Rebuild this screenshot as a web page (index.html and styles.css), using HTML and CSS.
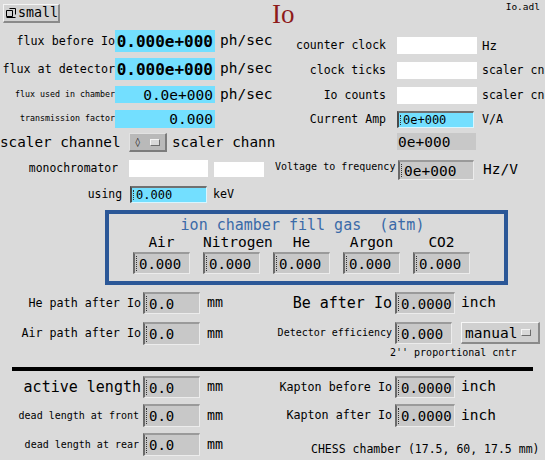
FILE: index.html
```html
<!DOCTYPE html>
<html>
<head>
<meta charset="utf-8">
<title>Io</title>
<link rel="stylesheet" href="styles.css">
</head>
<body>
<div class="screen">
  <header class="hdr">
    <div class="rdbtn">
      <svg class="rdicon" width="12" height="12" viewBox="0 0 12 12"><path d="M1.5 3.5h6v6h-6z M4.5 1.5h6v6" fill="none" stroke="#000" stroke-width="1"/><path d="M1.5 10.5h9" stroke="#000" stroke-width="1"/></svg>
      <span>small</span>
    </div>
    <div class="title">Io</div>
    <div class="fname">Io.adl</div>
  </header>

  <section class="top">
    <div class="colL">
      <div class="row r1"><span class="lbl w115 f117">flux before Io</span><span class="fld mon big w100">0.000e+000</span><span class="unit ml5 f145">ph/sec</span></div>
      <div class="row r2"><span class="lbl w115 f117">flux at detector</span><span class="fld mon big w100">0.000e+000</span><span class="unit ml5 f145">ph/sec</span></div>
      <div class="row r3"><span class="lbl w115 f83">flux used in chamber</span><span class="fld mon right w100 f145">0.0e+000</span><span class="unit ml5 f145">ph/sec</span></div>
      <div class="row r4"><span class="lbl w115 f83">transmission factor</span><span class="fld mon right w100 f145">0.000</span></div>
      <div class="row r5"><span class="lbl lbl-left w129 f143">scaler channel</span><span class="menu w38"><span class="dia">◊</span><span class="mark"></span></span><span class="lbl lbl-left ml5 w105 f143">scaler chann</span></div>
      <div class="row r6"><span class="lbl w118 f114">monochromator</span><span class="fld white ml11 w79"></span><span class="fld white ml6 w50 h15"></span></div>
      <div class="row r7"><span class="lbl w122 f114">using</span><span class="fld ent blue ml8 w77 f12">0.000</span><span class="unit ml6 f117">keV</span></div>
    </div>
    <div class="colR">
      <div class="row a1"><span class="lbl lblR f115">counter clock</span><span class="fld white ml11 w80"></span><span class="unit ml5 f125">Hz</span></div>
      <div class="row a2"><span class="lbl lblR f115">clock ticks</span><span class="fld white ml11 w80"></span><span class="unit ml5 f115">scaler cn</span></div>
      <div class="row a3"><span class="lbl lblR f115">Io counts</span><span class="fld white ml11 w80"></span><span class="unit ml5 f115">scaler cn</span></div>
      <div class="row a4"><span class="lbl lblR f115">Current Amp</span><span class="fld ent blue ml11 w77 f12">0e+000</span><span class="unit ml8 f117">V/A</span></div>
      <div class="row a5"><span class="lbl lblR"></span><span class="fld grey ml11 w79 f145">0e+000</span></div>
      <div class="row a6"><span class="lbl w121 f10 top">Voltage to frequency</span><span class="fld ent ml2 w76 f145">0e+000</span><span class="unit ml9 f145">Hz/V</span></div>
    </div>
  </section>

  <section class="gasbox">
    <div class="gastitle">ion chamber fill gas  (atm)</div>
    <div class="gasgrid">
      <span class="gaslbl">Air</span>
      <span class="gaslbl">Nitrogen</span>
      <span class="gaslbl">He</span>
      <span class="gaslbl">Argon</span>
      <span class="gaslbl">CO2</span>
      <span class="fld ent f14 h22">0.000</span>
      <span class="fld ent f14 h22">0.000</span>
      <span class="fld ent f14 h22">0.000</span>
      <span class="fld ent f14 h22">0.000</span>
      <span class="fld ent f14 h22">0.000</span>
    </div>
  </section>

  <section class="mid">
    <div class="colL">
      <div class="row m1"><span class="lbl w141 f117">He path after Io</span><span class="fld ent ml2 w57 f14">0.0</span><span class="unit ml7 f13">mm</span></div>
      <div class="row m2"><span class="lbl w141 f117">Air path after Io</span><span class="fld ent ml2 w57 f14">0.0</span><span class="unit ml7 f13">mm</span></div>
    </div>
    <div class="colR">
      <div class="row n1"><span class="lbl w117 f15">Be after Io</span><span class="fld ent ml3 w60 f14">0.0000</span><span class="unit ml6 f145">inch</span></div>
      <div class="row n2"><span class="lbl w117 f10">Detector efficiency</span><span class="fld ent ml3 w57 f14">0.000</span><span class="menu light ml9 w79"><span class="mtext">manual</span><span class="mark"></span></span></div>
      <div class="caption cap1">2'' proportional cntr</div>
    </div>
  </section>

  <div class="rule"></div>

  <section class="bottom">
    <div class="colL">
      <div class="row b1"><span class="lbl w141 f15">active length</span><span class="fld ent ml2 w57 f14">0.0</span><span class="unit ml7 f13">mm</span></div>
      <div class="row b2"><span class="lbl w139 f10">dead length at front</span><span class="fld ent ml4 w57 f14">0.0</span><span class="unit ml7 f13">mm</span></div>
      <div class="row b3"><span class="lbl w139 f10">dead length at rear</span><span class="fld ent ml4 w57 f14">0.0</span><span class="unit ml7 f13">mm</span></div>
    </div>
    <div class="colR">
      <div class="row c1"><span class="lbl w117 f117">Kapton before Io</span><span class="fld ent ml3 w60 f14">0.0000</span><span class="unit ml6 f145">inch</span></div>
      <div class="row c2"><span class="lbl w117 f117">Kapton after Io</span><span class="fld ent ml3 w60 f14">0.0000</span><span class="unit ml6 f145">inch</span></div>
      <div class="caption cap2">CHESS chamber (17.5, 60, 17.5 mm)</div>
    </div>
  </section>
</div>
</body>
</html>
```

FILE: styles.css
```css
html, body {
  margin: 0;
  padding: 0;
  background: #dadada;
}
body {
  font-family: "DejaVu Sans Mono", "Liberation Mono", monospace;
  color: #000;
  width: 545px;
  height: 460px;
  overflow: hidden;
}
.screen {
  width: 545px;
  height: 460px;
  overflow: hidden;
}

/* header */
.hdr {
  height: 30px;
  display: flex;
  align-items: flex-start;
}
.rdbtn {
  margin: 4px 0 0 3px;
  width: 57px;
  height: 19px;
  box-sizing: border-box;
  background: #d2d2d2;
  border-style: solid;
  border-width: 1px 2px 2px 1px;
  border-color: #f4f4f4 #8a8a8a #8a8a8a #f4f4f4;
  display: flex;
  align-items: center;
  font-size: 13.3px;
  line-height: 16px;
}
.rdicon {
  margin: 0 1px 0 1px;
  flex: none;
}
.title {
  margin: -1px 0 0 212px;
  font-family: "Liberation Serif", serif;
  font-size: 27px;
  line-height: 30px;
  color: #8e1a1a;
}
.fname {
  margin: 1px 5px 0 auto;
  font-size: 9.5px;
  line-height: 12px;
}

/* generic */
.row {
  display: flex;
  align-items: center;
}
.lbl {
  flex: none;
  text-align: right;
  white-space: pre;
  overflow: hidden;
  line-height: 1.2;
}
.lbl-left { text-align: left; }
.lbl.top { align-self: flex-start; margin-top: 1px; }
.unit {
  flex: none;
  white-space: pre;
  line-height: 1.2;
}
.fld {
  flex: none;
  box-sizing: border-box;
  white-space: pre;
  overflow: hidden;
  height: 100%;
  display: flex;
  align-items: center;
  position: relative;
}
.mon { background: #73dfff; justify-content: flex-end; padding-right: 2px; }
.big { font-weight: bold; font-size: 16px; }
.white { background: #ffffff; }
.grey { background: #c8c8c8; padding-left: 1px; }
.ent {
  background: #c8c8c8;
  border-style: solid;
  border-width: 2px 1px 1px 2px;
  border-color: #9a9a9a #ececec #ececec #6a6a6a;
  padding-left: 4px;
}
.ent.blue { background: #73dfff; border-color: #707070 #d8f6ff #d8f6ff #4a4a4a; }
.ent::before {
  content: "";
  position: absolute;
  left: 1px;
  top: 2px;
  bottom: 2px;
  border-left: 1px dotted #333;
}
.h15 { height: 15px; align-self: flex-end; }
.h22 { height: 22px; }

/* menus */
.menu {
  flex: none;
  box-sizing: border-box;
  height: 100%;
  background: #b9b9b9;
  border-style: solid;
  border-width: 1px 2px 2px 1px;
  border-color: #e2e2e2 #7c7c7c #7c7c7c #e2e2e2;
  display: flex;
  align-items: center;
  justify-content: space-between;
  padding: 0 5px 0 5px;
}
.menu.light { background: #d0d0d0; border-color: #f6f6f6 #8a8a8a #8a8a8a #f6f6f6; padding: 0 7px 0 3px; }
.dia { font-size: 9px; line-height: 10px; }
.mtext { font-size: 14.5px; line-height: 16px; }
.mark {
  width: 8px;
  height: 5px;
  background: #d8d8d8;
  border-style: solid;
  border-width: 1px;
  border-color: #f4f4f4 #6c6c6c #6c6c6c #f4f4f4;
}

/* widths and margins */
.w38 { width: 38px; }
.w50 { width: 50px; }
.w57 { width: 57px; }
.w60 { width: 60px; }
.w76 { width: 76px; }
.w77 { width: 77px; }
.w79 { width: 79px; }
.w80 { width: 80px; }
.w100 { width: 100px; }
.w105 { width: 105px; }
.w115 { width: 115px; }
.w117 { width: 117px; }
.w118 { width: 118px; }
.w121 { width: 121px; }
.w122 { width: 122px; }
.w129 { width: 129px; }
.w139 { width: 139px; }
.w141 { width: 141px; }
.ml2 { margin-left: 2px; }
.ml3 { margin-left: 3px; }
.ml4 { margin-left: 4px; }
.ml5 { margin-left: 5px; }
.ml6 { margin-left: 6px; }
.ml7 { margin-left: 7px; }
.ml8 { margin-left: 8px; }
.ml9 { margin-left: 9px; }
.ml11 { margin-left: 11px; }

/* font sizes */
.f83 { font-size: 8.3px; }
.f10 { font-size: 10px; }
.f114 { font-size: 11.4px; }
.f115 { font-size: 11.5px; }
.f117 { font-size: 11.7px; }
.f12 { font-size: 12px; }
.f125 { font-size: 12.5px; }
.f13 { font-size: 13.3px; }
.f14 { font-size: 14px; }
.f143 { font-size: 14.3px; }
.f145 { font-size: 14.5px; }
.f15 { font-size: 15px; }

/* top section */
.top {
  height: 180px;
  display: flex;
}
.colL { width: 275px; flex: none; }
.colR { flex: 1; }
.r1 { height: 22px; }
.r2 { margin-top: 6px; height: 22px; }
.r3 { margin-top: 6px; height: 17px; }
.r4 { margin-top: 7px; height: 18px; }
.r5 { margin-top: 5px; height: 19px; }
.r6 { margin-top: 8px; height: 17px; }
.r7 { margin-top: 9px; height: 17px; }
.lblR { margin-left: 21px; width: 90px; }
.a1 { margin-top: 7px; height: 17px; }
.a2 { margin-top: 8px; height: 17px; }
.a3 { margin-top: 8px; height: 17px; }
.a4 { margin-top: 7px; height: 17px; }
.a5 { margin-top: 5px; height: 17px; }
.a6 { margin-top: 10px; height: 20px; }

/* gas box */
.gasbox {
  margin-left: 105px;
  width: 403px;
  height: 75px;
  box-sizing: border-box;
  border: 4px solid #2b5797;
}
.gastitle {
  padding-top: 3px;
  font-size: 15px;
  line-height: 17px;
  color: #3a6aa8;
  text-align: center;
  white-space: pre;
  margin-right: 8px;
}
.gasgrid {
  display: grid;
  grid-template-columns: repeat(5, 57px);
  column-gap: 13px;
  padding-left: 24px;
}
.gaslbl {
  text-align: center;
  font-size: 14.5px;
  line-height: 16px;
  white-space: pre;
  height: 18px;
}

/* mid section */
.mid {
  height: 82px;
  display: flex;
}
.m1 { margin-top: 7px; height: 22px; }
.m2 { margin-top: 8px; height: 23px; }
.n1 { margin-top: 7px; height: 22px; }
.n2 { margin-top: 8px; height: 22px; }
.caption { white-space: pre; }
.cap1 { margin: 3px 0 0 115px; font-size: 10px; line-height: 12px; }

.rule {
  margin-left: 12px;
  width: 521px;
  height: 4px;
  background: #000;
}

/* bottom section */
.bottom {
  height: 89px;
  display: flex;
}
.b1 { margin-top: 5px; height: 22px; }
.b2 { margin-top: 6px; height: 23px; }
.b3 { margin-top: 6px; height: 23px; }
.c1 { margin-top: 5px; height: 22px; }
.c2 { margin-top: 6px; height: 23px; }
.cap2 { margin: 15px 0 0 36px; font-size: 11.5px; line-height: 14px; }
```
